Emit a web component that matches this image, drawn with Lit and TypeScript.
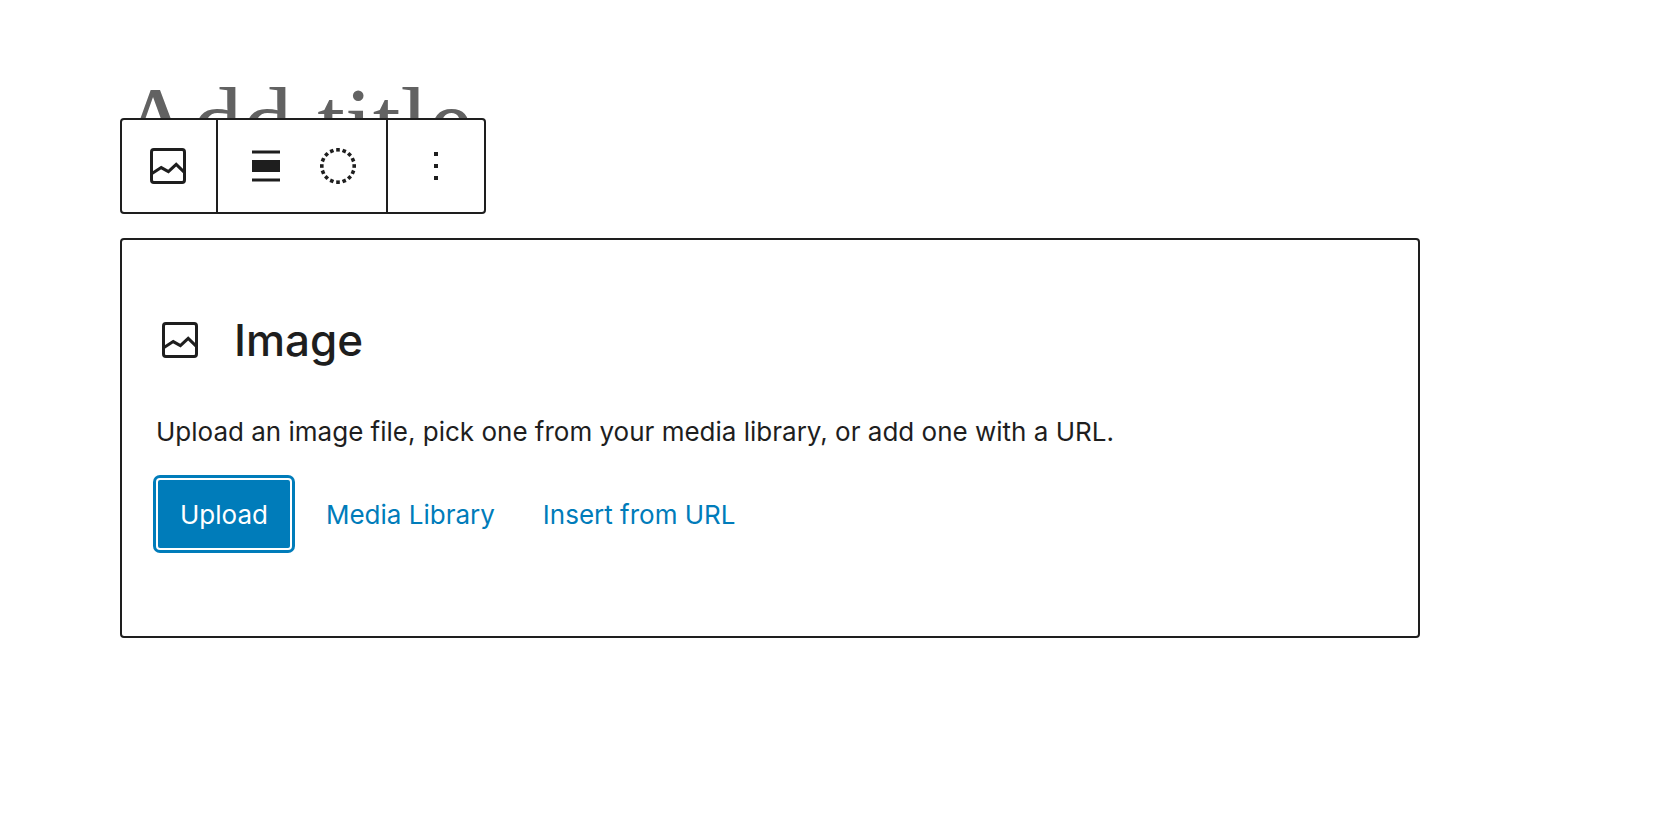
import { LitElement, html, css, svg } from "lit";
import { customElement, state } from "lit/decorators.js";

const imageIcon = html`
  <svg class="icon" viewBox="0 0 24 24" aria-hidden="true">
    <g fill="none" stroke="currentColor" stroke-width="1.5">
      <rect x="3.75" y="3.75" width="16.5" height="16.5" rx="1.2" />
      <path d="M4 15.7 8.6 12.8 12.2 14.8 16.1 11.2 20.2 15.2" />
    </g>
  </svg>
`;

const alignIcon = html`
  <svg class="icon" viewBox="0 0 24 24" aria-hidden="true">
    <path
      fill="currentColor"
      d="M5 15h14V9H5v6zm0 4.8h14v-1.5H5v1.5zM5 4.2v1.5h14V4.2H5z"
    />
  </svg>
`;

const marks = Array.from({ length: 16 }, (_, i) => i * 22.5);

const dottedCircleIcon = html`
  <svg class="icon" viewBox="0 0 24 24" aria-hidden="true">
    ${marks.map(
      (angle) => svg`<rect x="11.1" y="3" width="1.8" height="1.8"
        fill="currentColor" transform="rotate(${angle} 12 12)" />`
    )}
  </svg>
`;

const moreIcon = html`
  <svg class="icon" viewBox="0 0 24 24" aria-hidden="true">
    <path
      fill="currentColor"
      d="M13 19h-2v-2h2v2zm0-6h-2v-2h2v2zm0-6h-2V5h2v2z"
    />
  </svg>
`;

@customElement("app-root")
export class AppRoot extends LitElement {
  @state() private postTitle = "";

  static styles = css`
    :host {
      display: block;
      min-height: 100vh;
      box-sizing: border-box;
      padding: 64px 120px;
      background: #fff;
      color: #1e1e1e;
      font-family: Inter, "Liberation Sans", sans-serif;
      font-size: 26px;
      line-height: 36px;
    }
    * {
      box-sizing: border-box;
    }
    .editor {
      display: flex;
      flex-direction: column;
      max-width: 1300px;
      position: relative;
    }
    .title {
      width: 100%;
      height: 118px;
      margin: 0;
      padding: 0;
      border: 0;
      outline: 0;
      background: transparent;
      color: #1e1e1e;
      font: 400 100px/118px "Liberation Serif", serif;
    }
    .title::placeholder {
      color: #626262;
      opacity: 1;
    }
    .toolbar {
      position: absolute;
      top: 54px;
      left: 0;
      display: flex;
      height: 96px;
      border: 2px solid #1e1e1e;
      border-radius: 4px;
      background: #fff;
    }
    .group {
      display: flex;
      align-items: center;
      padding: 0 12px;
    }
    .group:first-child {
      padding-right: 14px;
    }
    .group + .group {
      border-left: 2px solid #1e1e1e;
    }
    .tool {
      display: flex;
      align-items: center;
      justify-content: center;
      width: 72px;
      height: 72px;
      margin: 0;
      padding: 0;
      border: 0;
      background: none;
      color: inherit;
      cursor: pointer;
    }
    .group:first-child .tool {
      width: 68px;
    }
    .icon {
      display: block;
      flex: none;
      width: 48px;
      height: 48px;
    }
    .card {
      display: flex;
      flex-direction: column;
      margin-top: 56px;
      padding: 72px 34px 86px;
      border: 2px solid #1e1e1e;
      border-radius: 4px;
      background: #fff;
    }
    .heading {
      display: flex;
      align-items: center;
      gap: 30px;
      margin: 0;
      font-size: 44px;
      font-weight: 500;
      line-height: 56px;
    }
    .hint {
      margin: 46px 0 0;
    }
    .actions {
      display: flex;
      flex-wrap: wrap;
      margin-top: 28px;
    }
    .button {
      height: 72px;
      margin: 0;
      padding: 2px 24px 0;
      border: 0;
      border-radius: 4px;
      background: none;
      color: #007cba;
      font: inherit;
      cursor: pointer;
    }
    .primary {
      margin-right: 10px;
      background: #007cba;
      color: #fff;
      box-shadow: inset 0 0 0 2px #fff, 0 0 0 3px #007cba;
    }
  `;

  private onTitle(event: Event) {
    this.postTitle = (event.target as HTMLInputElement).value;
  }

  render() {
    return html`
      <main class="editor">
        <input
          class="title"
          type="text"
          aria-label="Add title"
          placeholder="Add title"
          .value=${this.postTitle}
          @input=${this.onTitle}
        />
        <div class="toolbar" role="toolbar" aria-label="Block tools">
          <div class="group">
            <button class="tool" type="button" aria-label="Image">
              ${imageIcon}
            </button>
          </div>
          <div class="group">
            <button class="tool" type="button" aria-label="Align">
              ${alignIcon}
            </button>
            <button class="tool" type="button" aria-label="Duotone">
              ${dottedCircleIcon}
            </button>
          </div>
          <div class="group">
            <button class="tool" type="button" aria-label="Options">
              ${moreIcon}
            </button>
          </div>
        </div>
        <section class="card" aria-labelledby="block-name">
          <h2 class="heading" id="block-name">${imageIcon}Image</h2>
          <p class="hint">
            Upload an image file, pick one from your media library, or add one
            with a URL.
          </p>
          <div class="actions">
            <button class="button primary" type="button">Upload</button>
            <button class="button" type="button">Media Library</button>
            <button class="button" type="button">Insert from URL</button>
          </div>
        </section>
      </main>
    `;
  }
}
